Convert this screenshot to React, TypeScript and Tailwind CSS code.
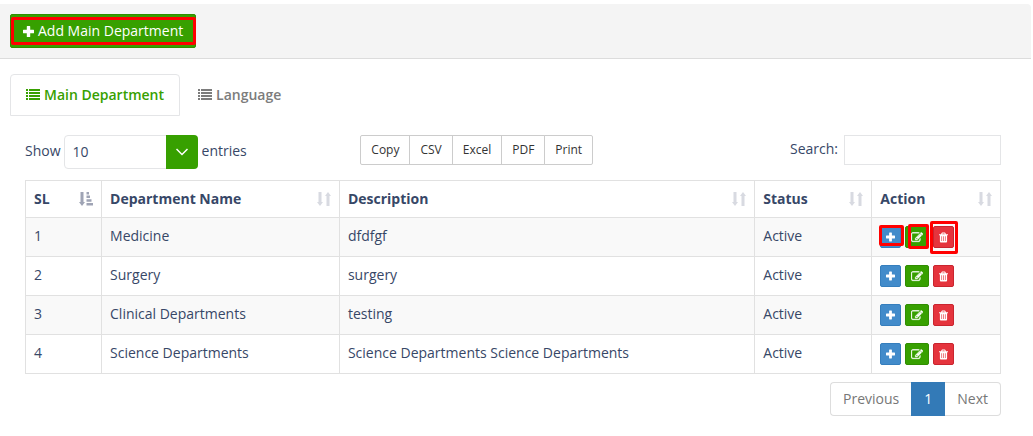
import type { ReactNode } from "react";

const EDIT =
  "M888 1184l116-116-152-152-116 116v56h96v96h56zm440-720q-16-16-33 1l-350 350q-17 17-1 33t33-1l350-350q17-17 1-33zm80 594v190q0 119-84.5 203.5t-203.5 84.5h-832q-119 0-203.5-84.5t-84.5-203.5v-832q0-119 84.5-203.5t203.5-84.5h832q63 0 117 25 15 7 18 23 3 17-9 29l-49 49q-14 14-32 8-23-6-45-6h-832q-66 0-113 47t-47 113v832q0 66 47 113t113 47h832q66 0 113-47t47-113v-126q0-13 9-22l64-64q15-15 35-7t20 29zm-96-738l288 288-672 672h-288v-288zm444 132l-92 92-288-288 92-92q28-28 68-28t68 28l152 152q28 28 28 68t-28 68z";

function PlusIcon({ className }: { className: string }) {
  return (
    <svg viewBox="0 0 11 11" fill="currentColor" aria-hidden="true" className={className}>
      <path d="M4.300 0h2.400q.5 0 .5.5v3.300h3.300q.5 0 .5.5v2.400q0 .5-.5.5H7.200v3.300q0 .5-.5.5H4.300q-.5 0-.5-.5V7.200H.5q-.5 0-.5-.5V4.300q0-.5.5-.5h3.300V.5q0-.5.5-.5z" />
    </svg>
  );
}

function EditIcon() {
  return (
    <svg viewBox="0 128 1792 1536" fill="currentColor" stroke="currentColor" strokeWidth="50" aria-hidden="true" className="h-[11px] w-3">
      <path d={EDIT} />
    </svg>
  );
}

function TrashIcon() {
  return (
    <svg viewBox="0 0 10 11" fill="currentColor" fillRule="evenodd" aria-hidden="true" className="h-[11px] w-2.5">
      <path d="M3.500 0h3q.5 0 .7.5L7.700 2H10v1H9v7q0 1-1 1H2q-1 0-1-1V3H0V2h2.300L2.800.5Q3 0 3.500 0zM4 1l-.4 1h2.800L6 1zM2.700 4.200h.7v5.300h-.7zM4.650 4.200h.7v5.300h-.7zM6.600 4.200h.7v5.300h-.7z" />
    </svg>
  );
}

function ListIcon() {
  return (
    <svg viewBox="0 0 14 12" fill="currentColor" aria-hidden="true" className="h-3 w-3.5">
      <path d="M0 0h2v2H0zM3 0h11v2H3zM0 3h2v2H0zM3 3h11v2H3zM0 6h2v2H0zM3 6h11v2H3zM0 9h2v2H0zM3 9h11v2H3z" />
    </svg>
  );
}

function SortIcon({ active }: { active?: boolean }) {
  return active ? (
    <svg viewBox="0 0 14 14" fill="#9fa4b5" aria-hidden="true" className="size-3.5 shrink-0">
      <path d="M1.500 0h3v10H6L3 14 0 10h1.500zM7.500 0h2.500v2.500H7.500zM7.500 3.500H11V6H7.500zM7.500 7.300h5v2.500h-5zM7.500 11H14v2.500H7.500z" />
    </svg>
  ) : (
    <svg viewBox="0 0 14 14" fill="#d8dae1" aria-hidden="true" className="size-3.5 shrink-0">
      <path d="M1.500 0h3v10H6L3 14 0 10h1.500zM9.500 14h3V4H14L11 0 8 4h1.500z" />
    </svg>
  );
}

function Mark({ className }: { className: string }) {
  return <span aria-hidden="true" className={`pointer-events-none absolute z-10 rounded-xs border-3 border-[#ff0000] ${className}`} />;
}

function ActionButton({ label, tone, children, mark }: { label: string; tone: string; children: ReactNode; mark?: string }) {
  return (
    <span className="relative flex">
      <button type="button" aria-label={label} className={`flex h-[22px] items-center rounded-xs border px-[5px] text-white ${tone}`}>
        {children}
      </button>
      {mark && <Mark className={mark} />}
    </span>
  );
}

const columns = [
  { name: "SL", width: "w-[7.8%]" },
  { name: "Department Name", width: "w-[24.4%]" },
  { name: "Description", width: "w-[42.6%]" },
  { name: "Status", width: "w-[12%]" },
  { name: "Action", width: "w-[13.2%]" },
];

const rows = [
  { sl: 1, name: "Medicine", description: "dfdfgf", status: "Active" },
  { sl: 2, name: "Surgery", description: "surgery", status: "Active" },
  { sl: 3, name: "Clinical Departments", description: "testing", status: "Active" },
  { sl: 4, name: "Science Departments", description: "Science Departments Science Departments", status: "Active" },
];

export default function App() {
  return (
    <div className="bg-white pt-1 font-['Open_Sans',sans-serif] text-sm leading-5 text-[#374767]">
      <header className="mr-0.5 flex rounded-tr-[4px] border-b border-[#dcdcdc] bg-[#f4f4f4] p-2.5">
        <div className="relative flex">
          <button type="button" className="flex h-[34px] items-center gap-1 rounded-xs border border-[#318d01] bg-[#37a000] px-3 text-white">
            <PlusIcon className="size-[11px]" />
            Add Main Department
          </button>
          <Mark className="inset-y-[3px] right-0 left-px" />
        </div>
      </header>

      <nav className="mt-[15px] ml-2.5 flex gap-0.5 font-semibold">
        <a href="#main" className="flex h-[42px] items-center gap-1 rounded-t-[4px] border border-[#e4e5e7] px-[15px] text-[#37a000]">
          <ListIcon />
          Main Department
        </a>
        <a href="#language" className="flex h-[42px] items-center gap-1 border border-transparent px-[15px] text-[#7c7c7c]">
          <ListIcon />
          Language
        </a>
      </nav>

      <main className="mt-[19px] mr-8 ml-[25px]">
        <div className="grid h-[45px] grid-cols-3 items-start gap-[30px]">
          <div className="flex items-center gap-[3px]">
            <label htmlFor="length" className="pb-0.5">Show</label>
            <span className="relative flex w-[134px]">
              <select id="length" defaultValue="10" className="h-[34px] w-full appearance-none rounded-[4px] border border-[#e4e5e7] bg-white px-2 text-[#374767]">
                <option>10</option>
                <option>25</option>
                <option>50</option>
              </select>
              <span className="pointer-events-none absolute inset-y-0 right-0 flex w-8 items-center justify-center rounded-r-[4px] bg-[#37a000]">
                <svg viewBox="0 0 12 8" fill="none" stroke="white" strokeWidth="1.500" aria-hidden="true" className="h-2 w-3">
                  <path d="M.5 1 6 6.500 11.500 1" />
                </svg>
              </span>
            </span>
            <span className="pb-0.5 pl-px">entries</span>
          </div>
          <div className="flex text-xs text-[#333333]">
            {["Copy", "CSV", "Excel", "PDF", "Print"].map((label) => (
              <button key={label} type="button" className="-ml-px h-[30px] border border-[#cccccc] bg-white px-2.5 first:ml-0 first:rounded-l-xs last:rounded-r-xs">
                {label}
              </button>
            ))}
          </div>
          <div className="flex items-center justify-end gap-1.5">
            <label htmlFor="search" className="pb-0.5">Search:</label>
            <input id="search" type="search" className="h-[30px] w-[157px] border border-[#e4e5e7] bg-white px-2.5" />
          </div>
        </div>

        <table className="w-full table-fixed border-collapse text-left">
          <thead>
            <tr className="h-[37px]">
              {columns.map((column, index) => (
                <th key={column.name} className={`border border-[#e1e1e1] pr-2 pl-2 ${column.width}`}>
                  <div className="flex items-center justify-between font-bold">
                    {column.name}
                    <SortIcon active={index === 0} />
                  </div>
                </th>
              ))}
            </tr>
          </thead>
          <tbody>
            {rows.map((row) => (
              <tr key={row.sl} className="h-[39px] odd:bg-[#f9f9f9]">
                <td className="border border-[#e1e1e1] px-2 pb-0.5">{row.sl}</td>
                <td className="border border-[#e1e1e1] px-2 pb-0.5">{row.name}</td>
                <td className="border border-[#e1e1e1] px-2 pb-0.5">{row.description}</td>
                <td className="border border-[#e1e1e1] px-2 pb-0.5">{row.status}</td>
                <td className="border border-[#e1e1e1] px-2">
                  <div className="flex gap-1">
                    <ActionButton label="Add" tone="w-[21px] border-[#357ebd] bg-[#428bca]" mark={row.sl === 1 ? "-top-px -left-px h-[21px] w-[25px]" : undefined}>
                      <PlusIcon className="size-2.5" />
                    </ActionButton>
                    <ActionButton label="Edit" tone="w-6 border-[#318d01] bg-[#37a000]" mark={row.sl === 1 ? "-top-0.5 left-[3px] h-[25px] w-[21px]" : undefined}>
                      <EditIcon />
                    </ActionButton>
                    <ActionButton label="Delete" tone="w-[21px] border-[#c9252f] bg-[#e5343d]" mark={row.sl === 1 ? "-top-[5px] -left-[3px] h-[33px] w-7" : undefined}>
                      <TrashIcon />
                    </ActionButton>
                  </div>
                </td>
              </tr>
            ))}
          </tbody>
        </table>

        <nav aria-label="Pagination" className="mt-2 flex justify-end text-[#777777]">
          <a href="#previous" className="rounded-l-[4px] border border-r-0 border-[#dddddd] px-3 py-1.5">Previous</a>
          <a href="#page-1" aria-current="page" className="border border-[#337ab7] bg-[#337ab7] px-3 py-1.5 text-white">1</a>
          <a href="#next" className="rounded-r-[4px] border border-l-0 border-[#dddddd] px-3 py-1.5">Next</a>
        </nav>
      </main>
    </div>
  );
}
